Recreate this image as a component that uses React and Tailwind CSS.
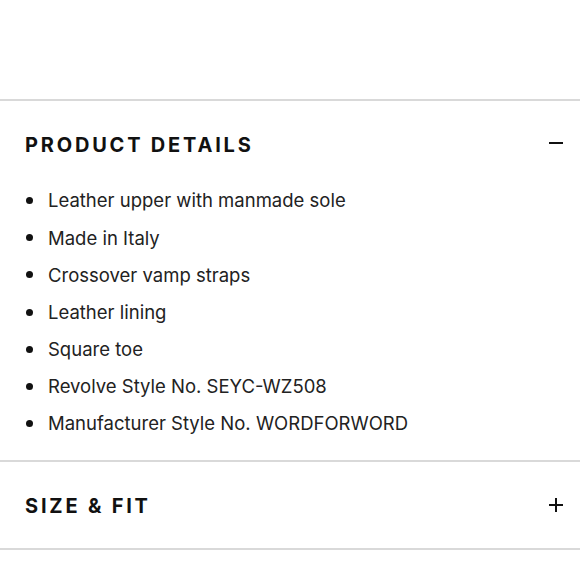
import React from "react";

const items = [
  "Leather upper with manmade sole",
  "Made in Italy",
  "Crossover vamp straps",
  "Leather lining",
  "Square toe",
  "Revolve Style No. SEYC-WZ508",
  "Manufacturer Style No. WORDFORWORD",
];

export default function App() {
  return (
    <div className="w-[580px] h-[580px] bg-white overflow-hidden text-[#111]" style={{ fontFamily: "Inter, 'Liberation Sans', sans-serif" }}>
      <div className="h-[99px]" />
      <div className="h-[2px] bg-[#d9d9d9]" />
      <div className="h-[80px] flex items-center justify-between pl-[25px] pr-[17px]">
        <span className="text-[20px] font-bold tracking-[0.14em] leading-none mt-[7px]">PRODUCT DETAILS</span>
        <span className="w-[14px] h-[2px] bg-[#111] mt-[4px]" />
      </div>
      <ul className="pt-[1px] pb-[18px]">
        {items.map((t) => (
          <li key={t} className="h-[37.2px] flex items-center pl-[26px]">
            <span className="w-[7px] h-[7px] rounded-full bg-[#111] mr-[15px]" />
            <span className="text-[18.5px] leading-none text-[#222]">{t}</span>
          </li>
        ))}
      </ul>
      <div className="h-[2px] bg-[#d9d9d9]" />
      <div className="h-[86px] flex items-center justify-between pl-[25px] pr-[17px]">
        <span className="text-[20px] font-bold tracking-[0.14em] leading-none mt-[2px]">SIZE &amp; FIT</span>
        <span className="relative w-[14px] h-[14px] flex items-center justify-center">
          <span className="absolute w-[14px] h-[2px] bg-[#111]" />
          <span className="absolute w-[2px] h-[14px] bg-[#111]" />
        </span>
      </div>
      <div className="h-[2px] bg-[#d9d9d9]" />
    </div>
  );
}
